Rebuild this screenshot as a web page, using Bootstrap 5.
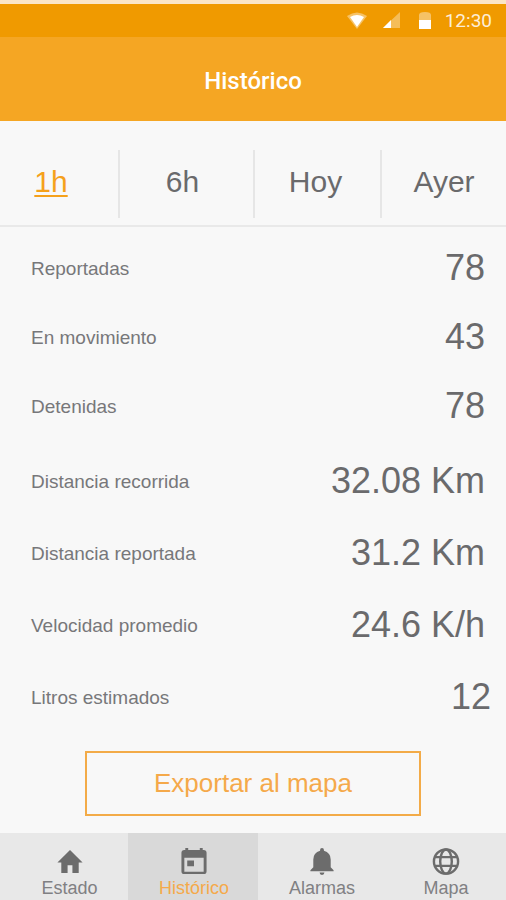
<!DOCTYPE html>
<html lang="es">
<head>
<meta charset="utf-8">
<meta name="viewport" content="width=device-width, initial-scale=1">
<title>Histórico</title>
<link href="https://cdn.jsdelivr.net/npm/bootstrap@5.3.0/dist/css/bootstrap.min.css" rel="stylesheet">
<style>
  body { font-family: "Liberation Sans", Arial, sans-serif; background: #f8f8f8; color: #6a6a6c; }
  .status-bar { background: #f09a00; height: 37px; border-top: 4px solid #fbe6c6; font: 400 19px/32px Roboto, sans-serif; color: #fdeed8; padding-right: 14px; }
  .app-bar { background: #f5a623; height: 84px; padding-top: 4px; }
  .app-bar h1 { font: 500 24px/32px Roboto, sans-serif; }
  .range-tabs { display: grid; grid-template-columns: 120fr 135fr 127fr 124fr; border-bottom: 2px solid #e9e9e9; padding: 29px 0 7px; }
  .range-tabs a { font-size: 30px; line-height: 64px; padding-bottom: 4px; color: #6a6a6c; text-align: center; text-decoration: none; border-right: 2px solid #e6e6e6; padding-right: 8px; }
  .range-tabs a:first-child { padding-right: 16px; }
  .range-tabs a:nth-child(3) { padding-right: 4px; }
  .range-tabs a:last-child { border: 0; padding-right: 0; }
  .range-tabs a.active { color: #f5a11c; text-decoration: underline; text-decoration-thickness: 2px; text-underline-offset: 3px; }
  .stats { padding: 6px 21px 0 31px; }
  .stat { height: 69px; }
  .stats-travel { padding-top: 5px; }
  .stats-travel .stat { height: 72px; }
  .stat dt { font-size: 19px; font-weight: 400; color: #77777a; padding-top: 3px; }
  .stat dd { font-size: 36px; line-height: 44px; }
  .stat-litres { margin-right: -6px; }
  .btn-export { width: 66.5%; height: 65px; margin-top: 18px; border: 2px solid #f3ab48; border-radius: 0; color: #f5a94a; font-size: 26px; line-height: 32px; padding: 0 0 2px; }
  .bottom-nav { display: grid; grid-template-columns: 128fr 130fr 128fr 120fr; background: #e8e8e8; }
  .bottom-nav a { height: 67px; padding-top: 14px; font-size: 18px; line-height: 24px; color: #808083; text-decoration: none; }
  .bottom-nav a:first-child { padding-left: 11px; }
  .bottom-nav a.active { background: #d9d9d9; color: #f5a94a; padding-left: 2px; }
  .bottom-nav svg { width: 30px; height: 30px; fill: #6c6c6c; }
</style>
</head>
<body>
<div class="d-flex flex-column min-vh-100">
  <div class="status-bar d-flex justify-content-end align-items-center">
    <svg width="20" height="18" viewBox="0 0 20 18" aria-hidden="true"><path d="M0 4Q10-3 20 4L10 17Z" fill="#fff" opacity=".4"/><path d="M3 5Q10 1 17 5L10 15Z" fill="#fff"/></svg>
    <svg class="ms-3" width="18" height="17" viewBox="0 0 18 17" aria-hidden="true"><path d="M0 16L17 0V16Z" fill="#fff" opacity=".35"/><path d="M0 16L8 8V16Z" fill="#fff"/></svg>
    <svg class="ms-3" width="16" height="20" viewBox="0 0 16 20" aria-hidden="true"><path d="M2 9V4Q2 1 8 1T14 4V9Z" fill="#fff" opacity=".4"/><path d="M2 9H14V18H2Z" fill="#fff"/></svg>
    <time class="ms-2 ps-1">12:30</time>
  </div>
  <header class="app-bar d-flex justify-content-center align-items-center text-white">
    <h1 class="m-0">Histórico</h1>
  </header>
  <nav class="range-tabs" aria-label="Periodo">
    <a href="#h1" class="active" aria-current="true">1h</a>
    <a href="#h6">6h</a>
    <a href="#hoy">Hoy</a>
    <a href="#ayer">Ayer</a>
  </nav>
  <main class="flex-grow-1">
    <div class="stats">
      <dl class="m-0">
        <div class="stat d-flex justify-content-between align-items-center"><dt>Reportadas</dt><dd class="m-0">78</dd></div>
        <div class="stat d-flex justify-content-between align-items-center"><dt>En movimiento</dt><dd class="m-0">43</dd></div>
        <div class="stat d-flex justify-content-between align-items-center"><dt>Detenidas</dt><dd class="m-0">78</dd></div>
      </dl>
      <dl class="stats-travel m-0">
        <div class="stat d-flex justify-content-between align-items-center"><dt>Distancia recorrida</dt><dd class="m-0">32.08 Km</dd></div>
        <div class="stat d-flex justify-content-between align-items-center"><dt>Distancia reportada</dt><dd class="m-0">31.2 Km</dd></div>
        <div class="stat d-flex justify-content-between align-items-center"><dt>Velocidad promedio</dt><dd class="m-0">24.6 K/h</dd></div>
        <div class="stat stat-litres d-flex justify-content-between align-items-center"><dt>Litros estimados</dt><dd class="m-0">12</dd></div>
      </dl>
    </div>
    <button type="button" class="btn btn-export d-block mx-auto">Exportar al mapa</button>
  </main>
  <nav class="bottom-nav" aria-label="Secciones">
    <a href="#estado" class="d-flex flex-column align-items-center">
      <svg viewBox="0 0 30 30" aria-hidden="true"><path d="M15 3L2 16H6V27H12.500V19H17.500V27H24V16H28Z"/></svg>Estado</a>
    <a href="#historico" class="active d-flex flex-column align-items-center" aria-current="page">
      <svg viewBox="0 0 30 30" aria-hidden="true"><path fill-rule="evenodd" d="M6 1H9V3H21V1H24V3H25Q28 3 28 6V25Q28 28 25 28H5Q2 28 2 25V6Q2 3 5 3H6ZM5 11V25.500H25V11ZM8 14H15V20H8Z"/></svg>Histórico</a>
    <a href="#alarmas" class="d-flex flex-column align-items-center">
      <svg viewBox="0 0 30 30" aria-hidden="true"><path d="M13 3Q13 1 15 1T17 3V4Q24 6 24 13V21L27 24V25H3V24L6 21V13Q6 6 13 4ZM12.500 26.500H17.500Q17.500 29 15 29T12.500 26.500Z"/></svg>Alarmas</a>
    <a href="#mapa" class="d-flex flex-column align-items-center">
      <svg viewBox="0 0 30 30" aria-hidden="true"><g fill="none" stroke="#6c6c6c" stroke-width="2.5"><circle cx="15" cy="15" r="12.500"/><ellipse cx="15" cy="15" rx="6" ry="12.500"/><path d="M3 10.500H27M3 19.500H27"/></g></svg>Mapa</a>
  </nav>
</div>
<script src="https://cdn.jsdelivr.net/npm/bootstrap@5.3.0/dist/js/bootstrap.bundle.min.js"></script>
</body>
</html>
